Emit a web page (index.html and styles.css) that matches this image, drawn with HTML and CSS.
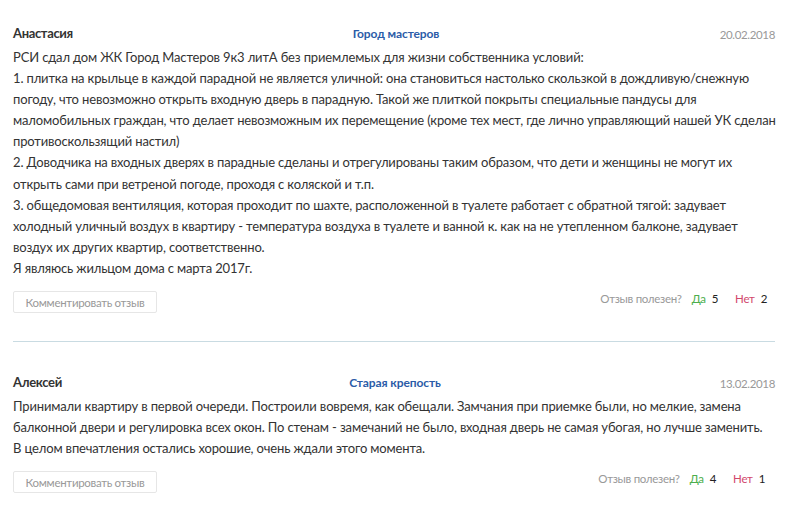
FILE: index.html
```html
<!DOCTYPE html>
<html lang="ru">
<head>
<meta charset="utf-8">
<title>Отзывы</title>
<link rel="stylesheet" href="styles.css">
</head>
<body>
<div class="reviews">
  <article class="review">
    <header class="review-head">
      <span class="author">Анастасия</span>
      <a class="complex" href="#">Город мастеров</a>
      <span class="date">20.02.2018</span>
    </header>
    <div class="review-text">РСИ сдал дом ЖК Город Мастеров 9к3 литА без приемлемых для жизни собственника условий:<br>1. плитка на крыльце в каждой парадной не является уличной: она становиться настолько скользкой в дождливую/снежную погоду, что невозможно открыть входную дверь в парадную. Такой же плиткой покрыты специальные пандусы для маломобильных граждан, что делает невозможным их перемещение (кроме тех мест, где лично управляющий нашей УК сделан противоскользящий настил)<br>2. Доводчика на входных дверях в парадные сделаны и отрегулированы таким образом, что дети и женщины не могут их открыть сами при ветреной погоде, проходя с коляской и т.п.<br>3. общедомовая вентиляция, которая проходит по шахте, расположенной в туалете работает с обратной тягой: задувает холодный уличный воздух в квартиру - температура воздуха в туалете и ванной к. как на не утепленном балконе, задувает воздух их других квартир, соответственно.<br>Я являюсь жильцом дома с марта 2017г.</div>
    <footer class="review-foot">
      <button class="comment-btn" type="button">Комментировать отзыв</button>
      <div class="useful">
        <span class="useful-q">Отзыв полезен?</span>
        <span class="yes">Да</span><span class="count">5</span>
        <span class="no">Нет</span><span class="count">2</span>
      </div>
    </footer>
  </article>
  <article class="review">
    <header class="review-head">
      <span class="author">Алексей</span>
      <a class="complex" href="#">Старая крепость</a>
      <span class="date">13.02.2018</span>
    </header>
    <div class="review-text review-text-short">Принимали квартиру в первой очереди. Построили вовремя, как обещали. Замчания при приемке были, но мелкие, замена балконной двери и регулировка всех окон. По стенам - замечаний не было, входная дверь не самая убогая, но лучше заменить. В целом впечатления остались хорошие, очень ждали этого момента.</div>
    <footer class="review-foot">
      <button class="comment-btn" type="button">Комментировать отзыв</button>
      <div class="useful">
        <span class="useful-q">Отзыв полезен?</span>
        <span class="yes">Да</span><span class="count">4</span>
        <span class="no">Нет</span><span class="count">1</span>
      </div>
    </footer>
  </article>
</div>
</body>
</html>
```
FILE: styles.css
```css
html, body {
  margin: 0;
  padding: 0;
  background: #fff;
}
body {
  font-family: Lato, "Liberation Sans", Arial, sans-serif;
  color: #333;
}
.reviews {
  width: 764px;
  margin-left: 13px;
  padding-top: 23px;
}
.review + .review {
  border-top: 1px solid #c9dbe2;
  margin-top: 28px;
  padding-top: 30px;
  width: 762px;
}
.review-head {
  display: grid;
  grid-template-columns: 1fr auto 1fr;
  align-items: center;
  height: 20px;
  margin-bottom: 4px;
}
.author {
  font-weight: bold;
  font-size: 13px;
  letter-spacing: -0.35px;
  color: #333;
}
.complex {
  font-weight: bold;
  font-size: 12px;
  letter-spacing: -0.1px;
  color: #2b5ca8;
  text-decoration: none;
  padding-left: 2px;
  padding-top: 1px;
}
.date {
  justify-self: end;
  font-size: 11.5px;
  letter-spacing: -0.35px;
  color: #999;
  padding-right: 2px;
  padding-top: 2px;
}
.review + .review .date {
  padding-right: 0;
}
.review-text {
  font-size: 13px;
  line-height: 21.1px;
  letter-spacing: -0.15px;
}
.review-text-short {
  width: 758px;
}
.review-foot {
  display: flex;
  align-items: center;
  justify-content: space-between;
  margin-top: 12px;
}
.comment-btn {
  font-family: inherit;
  font-size: 11.5px;
  letter-spacing: -0.3px;
  color: #999;
  background: #fff;
  border: 1px solid #e6e6e6;
  border-radius: 2px;
  height: 22px;
  width: 144px;
  padding: 0;
  cursor: pointer;
}
.useful {
  display: flex;
  align-items: baseline;
  font-size: 11.5px;
  letter-spacing: -0.3px;
  padding-right: 10px;
  margin-top: -7px;
}
.useful-q {
  color: #999;
  margin-right: 10px;
}
.yes {
  color: #4cae4c;
  margin-right: 6px;
}
.no {
  color: #d2486c;
  margin-left: 17px;
  margin-right: 6px;
}
.count {
  color: #222;
}
```
